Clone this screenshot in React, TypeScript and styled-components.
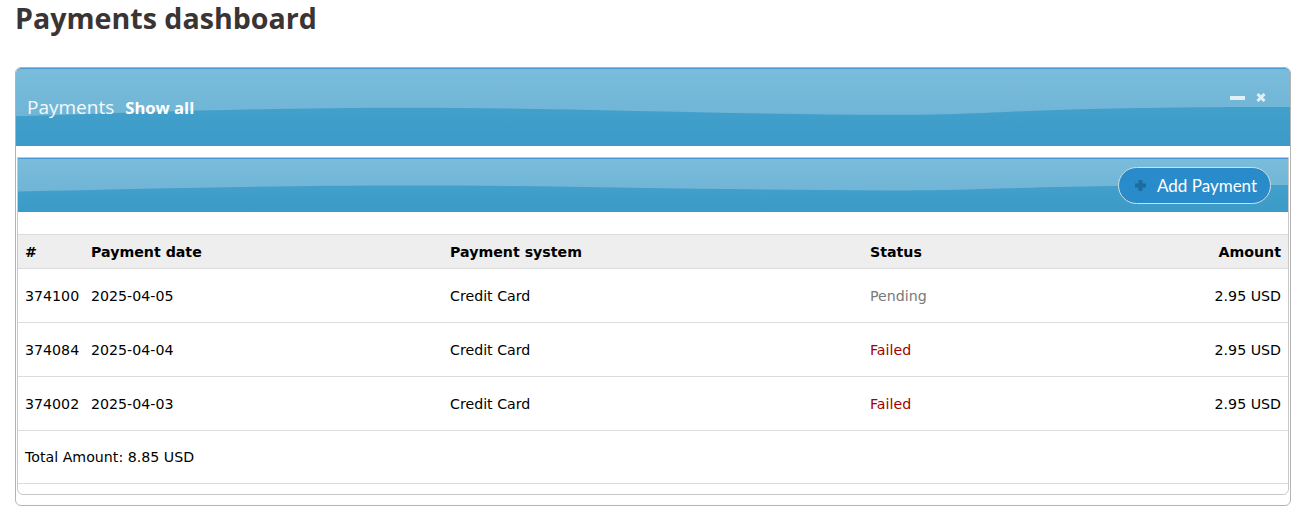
import React from 'react';
import styled, { createGlobalStyle } from 'styled-components';

const GlobalStyle = createGlobalStyle`
  html, body {
    margin: 0;
    padding: 0;
    background: #fff;
  }
  body {
    font-family: 'DejaVu Sans', Verdana, sans-serif;
    color: #000;
  }
`;

// light upper part of the glossy bar, stretched over the darker gradient
const waveSvg = encodeURIComponent(
  `<svg xmlns="http://www.w3.org/2000/svg" viewBox="0 0 1000 100" preserveAspectRatio="none">` +
    `<defs><linearGradient id="g" x1="0" y1="0" x2="0" y2="1">` +
    `<stop offset="0" stop-color="#7abcdb"/><stop offset="1" stop-color="#70b5d6"/></linearGradient></defs>` +
    `<path d="M0 0 H1000 V50 C900 50 840 52 780 56 C740 59 720 60 690 60 C560 60 430 51 310 51 C200 51 110 56 0 62 Z" fill="url(#g)"/>` +
    `</svg>`
);

const Page = styled.div`
  padding: 2px 14px 0 15px;
  width: 1276px;
`;

const Title = styled.h1`
  margin: 0 0 33px 0;
  font-family: 'Open Sans', 'Noto Sans', sans-serif;
  font-weight: 700;
  font-size: 28.6px;
  line-height: 32px;
  color: #3a3434;
`;

const Panel = styled.section`
  border: 1px solid #b4b4b4;
  border-radius: 6px;
  overflow: hidden;
  padding: 0 1px 10px 1px;
`;

const WaveBar = styled.div<{ $height: number }>`
  height: ${p => p.$height}px;
  margin: 0 -1px;
  box-shadow: inset 0 1px 0 #4a97d6;
  background-color: #42a0cb;
  background-image: url("data:image/svg+xml,${waveSvg}"),
    linear-gradient(#4aa6cf, #3b9ac7);
  background-size: 100% 100%;
  display: flex;
  align-items: center;
  box-sizing: border-box;
`;

const PanelHeader = styled(WaveBar)`
  padding: 0 24px 0 11px;
  justify-content: space-between;
  border-radius: 5px 5px 0 0;
`;

const HeaderTitle = styled.div`
  display: flex;
  align-items: baseline;
  gap: 11px;
  color: #fff;
  font-family: 'Open Sans', 'Noto Sans', sans-serif;
`;

const PanelName = styled.span`
  font-size: 19px;
  font-weight: 400;
  color: #f4f9fc;
`;

const ShowAll = styled.a`
  font-size: 16.6px;
  font-weight: 700;
  color: #fff;
  text-decoration: none;
  cursor: pointer;
`;

const Tools = styled.div`
  align-self: flex-start;
  margin-top: 25px;
  display: flex;
  align-items: center;
  gap: 11px;
`;

const Inner = styled.div`
  margin-top: 11px;
  border: 1px solid #c8c8c8;
  border-radius: 0 0 6px 6px;
  padding-bottom: 10px;
`;

const Toolbar = styled(WaveBar)`
  justify-content: flex-end;
  padding-right: 17px;
  margin: 0;
`;

const AddButton = styled.button`
  height: 37px;
  width: 153px;
  box-sizing: border-box;
  border: 1px solid #d3dde3;
  border-radius: 19px;
  background: #2a8bcb;
  color: #fff;
  font-family: Lato, 'Open Sans', sans-serif;
  font-size: 17px;
  display: flex;
  align-items: center;
  gap: 11px;
  padding: 0 0 0 16px;
  cursor: pointer;
`;

const TableWrap = styled.div`
  padding-top: 22px;
`;

const Table = styled.table`
  width: 100%;
  border-collapse: collapse;
  table-layout: fixed;
  font-size: 14.2px;
`;

const Col = styled.col<{ $w?: number }>`
  width: ${p => (p.$w ? `${p.$w}px` : 'auto')};
`;

const HeadRow = styled.tr`
  background: #eee;
  border-top: 1px solid #dcdcdc;
  border-bottom: 1px solid #dcdcdc;
`;

const Th = styled.th<{ $right?: boolean }>`
  height: 33px;
  padding: 0 7px;
  text-align: ${p => (p.$right ? 'right' : 'left')};
  font-weight: 700;
`;

const Row = styled.tr`
  border-bottom: 1px solid #dcdcdc;
`;

const Td = styled.td<{ $right?: boolean; $h?: number }>`
  height: ${p => p.$h ?? 53}px;
  padding: 0 7px;
  text-align: ${p => (p.$right ? 'right' : 'left')};
  white-space: nowrap;
`;

const Status = styled.span<{ $state: 'pending' | 'failed' }>`
  color: ${p => (p.$state === 'failed' ? '#a40000' : '#7a7a7a')};
`;

const MinusIcon = () => (
  <svg width="15" height="4" viewBox="0 0 15 4">
    <rect width="15" height="4" fill="#e3eff6" />
  </svg>
);

const CloseIcon = () => (
  <svg width="10" height="9" viewBox="0 0 10 9">
    <path d="M1.5 1 L8.5 8 M8.5 1 L1.5 8" stroke="#e3eff6" strokeWidth="3" />
  </svg>
);

const PlusIcon = () => (
  <svg width="11" height="11" viewBox="0 0 11 11">
    <path d="M5.5 0 V11 M0 5.5 H11" stroke="#1c6c9f" strokeWidth="4" />
  </svg>
);

type Payment = {
  id: number;
  date: string;
  system: string;
  status: 'pending' | 'failed';
  amount: number;
};

const payments: Payment[] = [
  { id: 374100, date: '2025-04-05', system: 'Credit Card', status: 'pending', amount: 2.95 },
  { id: 374084, date: '2025-04-04', system: 'Credit Card', status: 'failed', amount: 2.95 },
  { id: 374002, date: '2025-04-03', system: 'Credit Card', status: 'failed', amount: 2.95 },
];

export default function App() {
  const total = payments.reduce((sum, p) => sum + p.amount, 0);

  return (
    <Page>
      <GlobalStyle />
      <Title>Payments dashboard</Title>
      <Panel>
        <PanelHeader $height={78}>
          <HeaderTitle>
            <PanelName>Payments</PanelName>
            <ShowAll>Show all</ShowAll>
          </HeaderTitle>
          <Tools>
            <MinusIcon />
            <CloseIcon />
          </Tools>
        </PanelHeader>
        <Inner>
          <Toolbar $height={54}>
            <AddButton>
              <PlusIcon />
              Add Payment
            </AddButton>
          </Toolbar>
          <TableWrap>
            <Table>
              <colgroup>
                <Col $w={66} />
                <Col $w={359} />
                <Col $w={420} />
                <Col $w={238} />
                <Col />
              </colgroup>
              <thead>
                <HeadRow>
                  <Th>#</Th>
                  <Th>Payment date</Th>
                  <Th>Payment system</Th>
                  <Th>Status</Th>
                  <Th $right>Amount</Th>
                </HeadRow>
              </thead>
              <tbody>
                {payments.map(p => (
                  <Row key={p.id}>
                    <Td>{p.id}</Td>
                    <Td>{p.date}</Td>
                    <Td>{p.system}</Td>
                    <Td>
                      <Status $state={p.status}>
                        {p.status === 'failed' ? 'Failed' : 'Pending'}
                      </Status>
                    </Td>
                    <Td $right>{p.amount.toFixed(2)} USD</Td>
                  </Row>
                ))}
                <Row>
                  <Td colSpan={5} $h={52}>
                    Total Amount: {total.toFixed(2)} USD
                  </Td>
                </Row>
              </tbody>
            </Table>
          </TableWrap>
        </Inner>
      </Panel>
    </Page>
  );
}
